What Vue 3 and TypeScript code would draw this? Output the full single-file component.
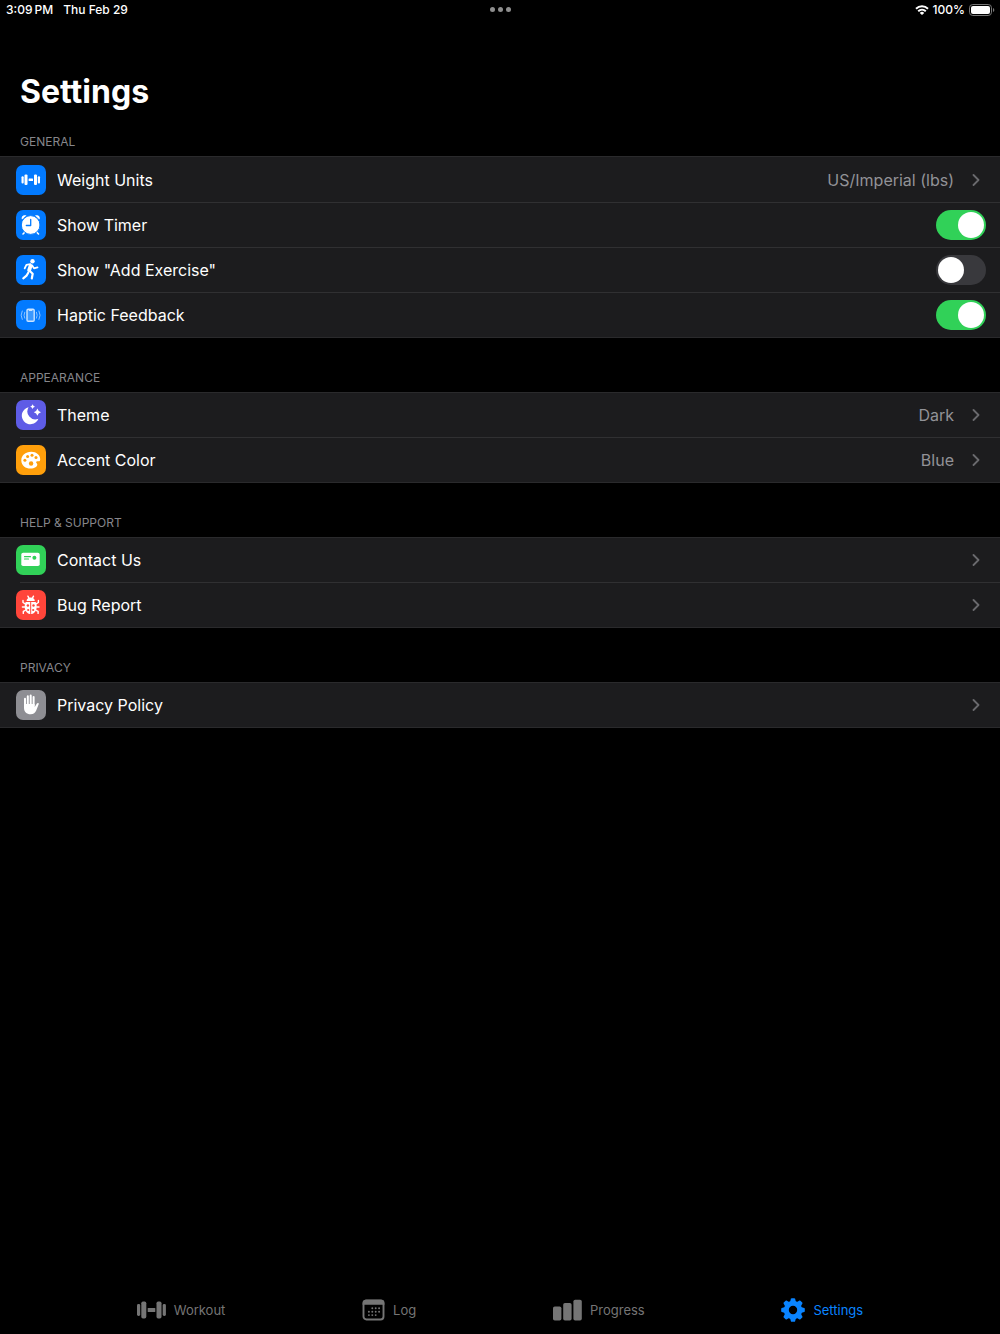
<script setup lang="ts">
import { reactive, ref } from 'vue'

type IconName = 'dumbbell' | 'alarm' | 'runner' | 'haptic' | 'moon' | 'palette' | 'contact' | 'bug' | 'hand'
type ToggleKey = 'timer' | 'addExercise' | 'haptics'

interface Row {
  icon: IconName
  tint: string
  label: string
  value?: string
  toggle?: ToggleKey
}

interface Section {
  title: string
  rows: Row[]
}

const toggles = reactive<Record<ToggleKey, boolean>>({
  timer: true,
  addExercise: false,
  haptics: true,
})

const sections: Section[] = [
  {
    title: 'GENERAL',
    rows: [
      { icon: 'dumbbell', tint: 'blue', label: 'Weight Units', value: 'US/Imperial (lbs)' },
      { icon: 'alarm', tint: 'blue', label: 'Show Timer', toggle: 'timer' },
      { icon: 'runner', tint: 'blue', label: 'Show "Add Exercise"', toggle: 'addExercise' },
      { icon: 'haptic', tint: 'blue', label: 'Haptic Feedback', toggle: 'haptics' },
    ],
  },
  {
    title: 'APPEARANCE',
    rows: [
      { icon: 'moon', tint: 'indigo', label: 'Theme', value: 'Dark' },
      { icon: 'palette', tint: 'orange', label: 'Accent Color', value: 'Blue' },
    ],
  },
  {
    title: 'HELP & SUPPORT',
    rows: [
      { icon: 'contact', tint: 'green', label: 'Contact Us' },
      { icon: 'bug', tint: 'red', label: 'Bug Report' },
    ],
  },
  {
    title: 'PRIVACY',
    rows: [{ icon: 'hand', tint: 'gray', label: 'Privacy Policy' }],
  },
]

const tabs = ['Workout', 'Log', 'Progress', 'Settings'] as const
const activeTab = ref<(typeof tabs)[number]>('Settings')

const gearTeeth = [0, 45, 90, 135, 180, 225, 270, 315]
const calendarDots = [
  [10.3, 9.3], [13.7, 9.3], [17.1, 9.3],
  [6.9, 12.7], [10.3, 12.7], [13.7, 12.7], [17.1, 12.7],
  [6.9, 16.1], [10.3, 16.1], [13.7, 16.1],
]
</script>

<template>
  <div class="screen">
    <header class="status">
      <div class="status-side">
        <span>3:09&#8201;PM</span>
        <span>Thu Feb 29</span>
      </div>
      <button class="more" type="button" aria-label="Multitasking"><i></i><i></i><i></i></button>
      <div class="status-side end">
        <svg class="wifi" viewBox="0 0 14 10" aria-hidden="true">
          <path d="M1 3.700a8.600 8.600 0 0 1 12 0M3.200 6.200a5.500 5.500 0 0 1 7.600 0" fill="none" stroke="#fff" stroke-width="1.900" />
          <path d="M7 10 4.800 7.900a3 3 0 0 1 4.400 0z" fill="#fff" />
        </svg>
        <span>100%</span>
        <svg class="battery" viewBox="0 0 26 12" aria-hidden="true">
          <rect x=".5" y=".5" width="22" height="11" rx="3.300" fill="none" stroke="#777" />
          <rect x="2" y="2" width="19" height="8" rx="2" fill="#fff" />
          <path d="M24 4v4c1.800-.6 1.800-3.400 0-4z" fill="#777" />
        </svg>
      </div>
    </header>

    <main>
      <h1>Settings</h1>
      <section v-for="section in sections" :key="section.title">
        <h2>{{ section.title }}</h2>
        <div class="group">
          <component
            :is="row.toggle ? 'label' : 'button'"
            v-for="row in section.rows"
            :key="row.label"
            class="row"
            :type="row.toggle ? undefined : 'button'"
          >
            <svg class="tile" :class="row.tint" viewBox="0 0 30 30" aria-hidden="true">
              <g v-if="row.icon === 'dumbbell'" fill="#fff">
                <rect x="5.500" y="11.200" width="2.200" height="7.200" rx="1" />
                <rect x="8.500" y="9.500" width="3" height="10.600" rx="1.100" />
                <rect x="12.600" y="13.500" width="4.400" height="2.600" rx=".4" />
                <rect x="18" y="9.500" width="3" height="10.600" rx="1.100" />
                <rect x="21.800" y="11.200" width="2.200" height="7.200" rx="1" />
              </g>
              <g v-else-if="row.icon === 'alarm'" stroke-linecap="round">
                <path d="M9 22l-2 2M20.500 22l2 2" stroke="#fff" stroke-width="1.600" />
                <path d="M6 9.400C4.800 7 7.100 4.400 10.500 5.400zM23.500 9.400C24.700 7 22.400 4.400 19 5.400z" fill="#fff" />
                <circle cx="14.700" cy="15" r="9.400" fill="#fff" stroke="#027aff" />
                <path d="M14.700 9.500v6h-4.400" fill="none" stroke="#027aff" stroke-width="1.300" stroke-linejoin="round" />
              </g>
              <g v-else-if="row.icon === 'runner'" fill="none" stroke="#fff" stroke-width="1.800" stroke-linecap="round" stroke-linejoin="round">
                <circle cx="16.500" cy="6.300" r="2.200" fill="#fff" stroke="none" />
                <path d="M8.700 13.400l1.700-3.600 4-.6" />
                <path d="M14.600 10.800l-1.500 4.500" stroke-width="3.800" />
                <path d="M16.200 10.500l1.800 2.900 3.500-1" />
                <path d="M13.800 16l2.900 2.700-.9 4.800" stroke-width="2.200" />
                <path d="M12.200 17.800l-1.700 2.900-3.200 2.600" stroke-width="2.200" />
              </g>
              <g v-else-if="row.icon === 'haptic'" fill="none" stroke="#cbe4ff" stroke-linecap="round">
                <rect x="11" y="9.200" width="7.200" height="12" rx="1.200" fill="#3a98ff" stroke-width="1.400" />
                <path d="M13.400 10.300h2.400" stroke-width="1.400" />
                <path d="M8.700 12.200q-1.500 3 0 6M20.500 12.200q1.500 3 0 6M6.200 11q-2.300 4.200 0 8.400M23 11q2.300 4.200 0 8.400" stroke="#8cc3ff" stroke-width="1" />
              </g>
              <g v-else-if="row.icon === 'moon'" fill="#fff">
                <path d="M12.600 7.200a8.600 8.600 0 1 0 9.800 11.600A8 8 0 0 1 12.600 7.200z" />
                <path d="M21.400 8.600q.7 2.900 3.600 3.600-2.900.7-3.600 3.600-.7-2.900-3.600-3.600 2.900-.7 3.600-3.600z" />
                <path d="M16.600 4.300q.5 1.900 2.400 2.400-1.900.5-2.400 2.400-.5-1.900-2.400-2.400 1.900-.5 2.400-2.400z" />
              </g>
              <g v-else-if="row.icon === 'palette'">
                <path d="M15.300 6.800C9.300 6.800 5.300 10.500 5.300 15.400c0 4.900 4.400 8.200 9.200 8.200 4.200 0 6.800-1.800 6.800-4 0-1.300-1.200-1.500-1.200-2.400 0-1 1.300-.9 2.500-.9 1.300 0 1.600-.9 1.600-2.100 0-4.200-3.800-7.400-8.900-7.400z" fill="#fff" />
                <g fill="#ff9f0b">
                  <circle cx="8.900" cy="15.200" r="1.500" />
                  <circle cx="11.600" cy="11.600" r="1.500" />
                  <circle cx="16" cy="10.200" r="1.500" />
                  <circle cx="20" cy="12.400" r="1.500" />
                  <circle cx="15.100" cy="18.500" r="2.200" />
                </g>
              </g>
              <g v-else-if="row.icon === 'contact'">
                <rect x="5.300" y="7.800" width="18.400" height="13.200" rx="1.800" fill="#fff" />
                <path d="M8.500 11.700h6M8.500 14h4" stroke="#31d158" stroke-width="1.200" stroke-linecap="round" />
                <circle cx="18.400" cy="12.700" r="2" fill="#31d158" />
              </g>
              <g v-else-if="row.icon === 'bug'" fill="none" stroke="#fff" stroke-width="1.400" stroke-linecap="round" stroke-linejoin="round">
                <path d="M10.600 11.100c0-2.300 1.700-3.500 4.100-3.500s4.100 1.200 4.100 3.500z" fill="#fff" stroke="none" />
                <path d="M11.900 6.200l1.200 2.200M17.500 6.200l-1.200 2.200" />
                <path d="M9.700 11.900h10c1 2 1.200 4.200.8 6.500-.6 3.400-3 5.600-5.800 5.600s-5.200-2.200-5.800-5.600c-.4-2.300-.2-4.500.8-6.500z" fill="#fff" stroke="none" />
                <path d="M9.200 13.800L7 12.500v-2M20.200 13.800l2.200-1.300v-2M8.700 17H6.400M20.700 17H23M9.300 20.300l-2 1.100v2M20.100 20.300l2 1.100v2" />
                <path d="M14.700 12.500v11" stroke="#ff453a" stroke-width="1" />
                <circle cx="11.900" cy="15.500" r="1.200" fill="#ff453a" stroke="none" />
                <circle cx="17.500" cy="15.500" r="1.200" fill="#ff453a" stroke="none" />
                <circle cx="12.200" cy="20" r="1.100" fill="#ff453a" stroke="none" />
                <circle cx="17.200" cy="20" r="1.100" fill="#ff453a" stroke="none" />
              </g>
              <g v-else fill="none" stroke="#fff" stroke-width="2" stroke-linecap="round">
                <path d="M9 8.700v8M11.800 6.300v9M14.700 5.600v9M17.600 7v9" />
                <path d="M8 14h10.600v3.300l2.300-3.800c.7-1.100 2.200-.6 1.800.7l-2.500 6.300c-.9 2.400-2.700 3.700-5.500 3.700C10.400 24.200 8 21.700 8 17.700z" fill="#fff" stroke="none" />
              </g>
            </svg>
            <span class="label">{{ row.label }}</span>
            <input v-if="row.toggle" v-model="toggles[row.toggle]" class="switch" type="checkbox" />
            <template v-else>
              <span v-if="row.value" class="value">{{ row.value }}</span>
              <svg class="chevron" viewBox="0 0 8 12" aria-hidden="true">
                <path d="M1.500 1l5 5-5 5" fill="none" stroke="#6a6a6e" stroke-width="1.800" stroke-linecap="round" stroke-linejoin="round" />
              </svg>
            </template>
          </component>
        </div>
      </section>
    </main>

    <nav class="tabs">
      <button
        v-for="tab in tabs"
        :key="tab"
        class="tab"
        :class="{ active: tab === activeTab }"
        type="button"
        @click="activeTab = tab"
      >
        <svg v-if="tab === 'Workout'" width="29" height="18" viewBox="0 0 29 18" fill="currentColor" aria-hidden="true">
          <rect x="0" y="3" width="3.200" height="12" rx="1.400" />
          <rect x="4.300" y=".5" width="5" height="17" rx="1.700" />
          <rect x="10.700" y="7" width="7.600" height="4" rx=".6" />
          <rect x="19.500" y=".5" width="5" height="17" rx="1.700" />
          <rect x="25.700" y="3" width="3.200" height="12" rx="1.400" />
        </svg>
        <svg v-else-if="tab === 'Log'" width="23" height="22" viewBox="0 0 23 22" fill="currentColor" aria-hidden="true">
          <rect x="1.500" y="1.500" width="20" height="19" rx="3" fill="none" stroke="currentColor" stroke-width="1.900" />
          <path d="M.6 5.800V4a3.200 3.200 0 0 1 3.200-3.300h15.400A3.200 3.200 0 0 1 22.400 4v1.800z" />
          <circle v-for="[x, y] in calendarDots" :key="`${x}-${y}`" :cx="x" :cy="y" r=".95" />
        </svg>
        <svg v-else-if="tab === 'Progress'" width="29" height="22" viewBox="0 0 29 22" fill="currentColor" aria-hidden="true">
          <rect x="0" y="7.500" width="8.400" height="14" rx="1.800" />
          <rect x="10.200" y="4" width="8.400" height="17.500" rx="1.800" />
          <rect x="20.400" y=".7" width="8.400" height="20.800" rx="1.800" />
        </svg>
        <svg v-else width="24" height="24" viewBox="0 0 24 24" aria-hidden="true">
          <circle cx="12" cy="12" r="6.700" fill="none" stroke="currentColor" stroke-width="5" />
          <path
            v-for="angle in gearTeeth"
            :key="angle"
            d="M9 4L9.900.8Q10.100.2 10.700.2h2.600q.6 0 .8.6L15 4z"
            fill="currentColor"
            :transform="`rotate(${angle} 12 12)`"
          />
        </svg>
        <span>{{ tab }}</span>
      </button>
    </nav>
  </div>
</template>

<style>
body {
  margin: 0;
  background: #000;
}
</style>

<style scoped>
.screen {
  display: flex;
  flex-direction: column;
  min-height: 100vh;
  background: #000;
  color: #fff;
  font-family: Inter, "Liberation Sans", sans-serif;
}

button {
  margin: 0;
  padding: 0;
  border: 0;
  background: none;
  color: inherit;
  font: inherit;
  text-align: left;
}

svg {
  display: block;
  flex: none;
}

.status {
  display: flex;
  align-items: center;
  box-sizing: border-box;
  height: 20px;
  padding: 0 5px 1px 6px;
  font-size: 12px;
  font-weight: 500;
}

.status-side {
  display: flex;
  flex: 1;
  align-items: center;
  gap: 10px;
}

.status-side.end {
  justify-content: flex-end;
  gap: 4px;
}

.more {
  display: flex;
  gap: 3px;
}

.more i {
  width: 5px;
  height: 5px;
  border-radius: 50%;
  background: #8e8e8e;
}

.wifi {
  width: 14px;
  height: 10px;
}

.battery {
  width: 26px;
  height: 12px;
}

main {
  flex: 1;
}

h1 {
  margin: 52px 20px 20px;
  font-size: 32px;
  font-weight: 700;
  line-height: 40px;
}

h2 {
  margin: 0 20px;
  padding: 0 0 4px;
  color: #86868b;
  font-size: 12px;
  font-weight: 400;
  line-height: 20px;
}

section + section {
  margin-top: 30px;
}

.group {
  padding-bottom: 1px;
  background: #1c1c1e;
  box-shadow: inset 0 1px #2a2a2c, inset 0 -1px #2a2a2c;
}

section:first-of-type .group {
  padding-top: 1px;
}

.row {
  display: flex;
  align-items: center;
  box-sizing: border-box;
  width: 100%;
  height: 45px;
  padding: 0 14px 0 16px;
  font-size: 16px;
}

.row + .row {
  background: linear-gradient(#303032, #303032) 20px 0 / 100% 1px no-repeat;
}

.tile {
  width: 30px;
  height: 30px;
  border-radius: 7px;
}

.blue { background: #027aff; }
.indigo { background: #5e5ce6; }
.orange { background: #ff9f0b; }
.green { background: #31d158; }
.red { background: #ff453a; }
.gray { background: #8e8e93; }

.label {
  flex: 1;
  margin-left: 11px;
}

.value {
  margin-right: 18px;
  color: #929297;
}

.chevron {
  width: 8px;
  height: 12px;
  margin-right: 6px;
}

.switch {
  display: flex;
  align-items: center;
  appearance: none;
  box-sizing: border-box;
  width: 50px;
  height: 30px;
  margin: 0;
  padding: 0 2px;
  border-radius: 15px;
  background: #39393d;
}

.switch::before {
  content: "";
  width: 26px;
  height: 26px;
  border-radius: 50%;
  background: #fff;
}

.switch:checked {
  justify-content: flex-end;
  background: #31d158;
}

.tabs {
  display: flex;
  align-items: center;
  justify-content: space-evenly;
  height: 48px;
  color: #757575;
}

.tab {
  display: flex;
  align-items: center;
  gap: 8px;
  font-size: 13px;
}

.tab.active {
  color: #0a84ff;
}
</style>
